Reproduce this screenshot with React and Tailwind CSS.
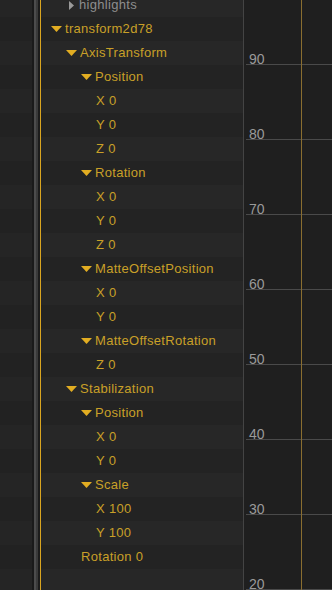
import React from "react";

const rows = [
  { label: "highlights", level: 1, type: "closed" },
  { label: "transform2d78", level: 0, type: "open" },
  { label: "AxisTransform", level: 1, type: "open" },
  { label: "Position", level: 2, type: "open" },
  { label: "X 0", level: 3 },
  { label: "Y 0", level: 3 },
  { label: "Z 0", level: 3 },
  { label: "Rotation", level: 2, type: "open" },
  { label: "X 0", level: 3 },
  { label: "Y 0", level: 3 },
  { label: "Z 0", level: 3 },
  { label: "MatteOffsetPosition", level: 2, type: "open" },
  { label: "X 0", level: 3 },
  { label: "Y 0", level: 3 },
  { label: "MatteOffsetRotation", level: 2, type: "open" },
  { label: "Z 0", level: 3 },
  { label: "Stabilization", level: 1, type: "open" },
  { label: "Position", level: 2, type: "open" },
  { label: "X 0", level: 3 },
  { label: "Y 0", level: 3 },
  { label: "Scale", level: 2, type: "open" },
  { label: "X 100", level: 3 },
  { label: "Y 100", level: 3 },
  { label: "Rotation 0", level: 2 },
  { label: "", level: 0 },
];

const font = { fontFamily: "'Liberation Sans', Arial, sans-serif" };

const DownTri = () => (
  <svg width="11" height="6" viewBox="0 0 11 6" className="shrink-0">
    <polygon points="0,0 11,0 5.5,6" fill="#e2ad22" />
  </svg>
);

const RightTri = () => (
  <svg width="5" height="9" viewBox="0 0 5 9" className="shrink-0">
    <polygon points="0,0 5,4.5 0,9" fill="#9a9a9a" />
  </svg>
);

const TreeRow = ({ row, index }) => {
  const pad = 10 + row.level * 15;
  const bg = index % 2 === 0 ? "bg-[#272727]" : "bg-[#232323]";
  return (
    <div className={`h-[24px] shrink-0 flex items-center ${bg}`}>
      {row.type === "open" && (
        <div className="flex items-center gap-[3px]" style={{ paddingLeft: pad }}>
          <DownTri />
          <span className="text-[13px] tracking-[0.3px] text-[#c9a028]">{row.label}</span>
        </div>
      )}
      {row.type === "closed" && (
        <div className="flex items-center gap-[5px]" style={{ paddingLeft: pad + 3 }}>
          <RightTri />
          <span className="text-[13px] tracking-[0.3px] text-[#8e8e8e]">{row.label}</span>
        </div>
      )}
      {!row.type && row.label && (
        <span
          className="text-[13px] tracking-[0.3px] text-[#c9a028]"
          style={{ paddingLeft: pad }}
        >
          {row.label}
        </span>
      )}
    </div>
  );
};

const Graph = () => {
  const lines = [
    { y: 64, v: 90 },
    { y: 139, v: 80 },
    { y: 214, v: 70 },
    { y: 289, v: 60 },
    { y: 364, v: 50 },
    { y: 439, v: 40 },
    { y: 514, v: 30 },
    { y: 589, v: 20 },
  ];
  return (
    <svg width="88" height="590" className="block">
      <rect width="88" height="590" fill="#1f1f1f" />
      {lines.map((l) => (
        <g key={l.v}>
          <line x1="2" x2="88" y1={l.y + 0.5} y2={l.y + 0.5} stroke="#4a4a4a" />
          <text x="5" y={l.y} fontSize="14" fill="#9a9a9a" style={font}>
            {l.v}
          </text>
        </g>
      ))}
      <line x1="57.5" x2="57.5" y1="0" y2="590" stroke="#8a6e30" />
    </svg>
  );
};

export default function App() {
  return (
    <div className="flex h-[590px] w-[332px] overflow-hidden bg-[#1f1f1f]" style={font}>
      <div className="w-[32px] shrink-0 flex flex-col -mt-[7px]">
        {rows.map((_, i) => (
          <div
            key={i}
            className={`h-[24px] shrink-0 ${i % 2 === 0 ? "bg-[#252525]" : "bg-[#222222]"}`}
          />
        ))}
      </div>
      <div className="w-[2px] shrink-0 bg-[#1a1a1a]" />
      <div className="w-[2px] shrink-0 bg-[#4c4c4c]" />
      <div className="w-[2px] shrink-0 bg-[#3a3a3a]" />
      <div className="w-[2px] shrink-0 bg-[#1c1c1c]" />
      <div className="w-[1px] shrink-0 bg-[#d9a520]" />
      <div className="w-[202px] shrink-0 flex flex-col -mt-[7px]">
        {rows.map((row, i) => (
          <TreeRow key={i} row={row} index={i} />
        ))}
      </div>
      <div className="w-[1px] shrink-0 bg-[#444444]" />
      <Graph />
    </div>
  );
}
